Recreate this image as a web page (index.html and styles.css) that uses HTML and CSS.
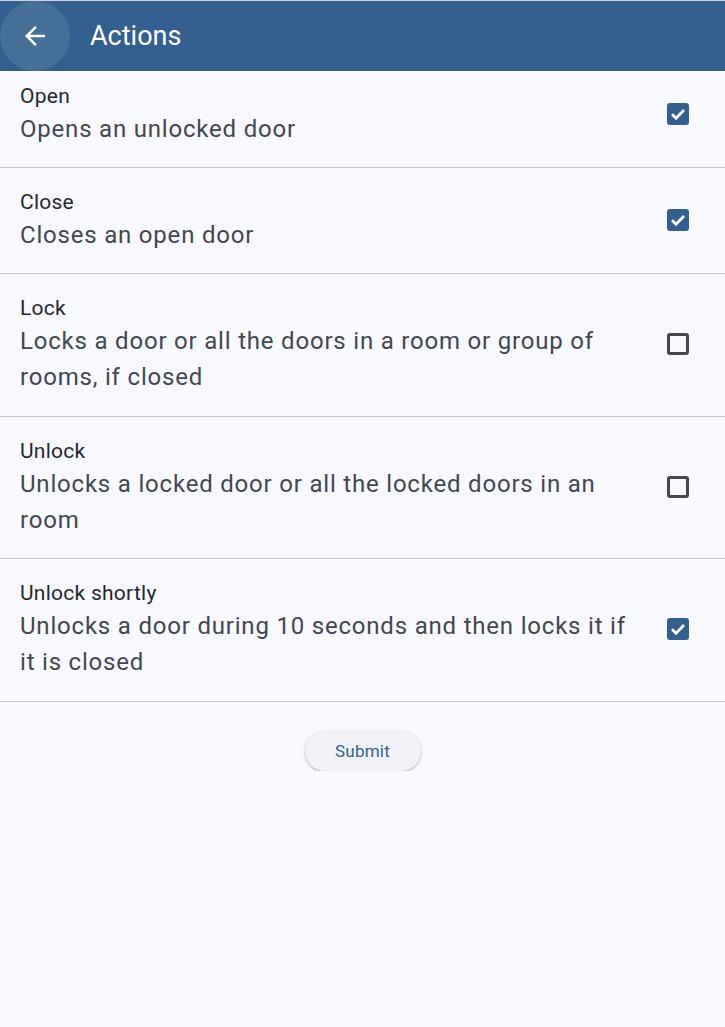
FILE: index.html
```html
<!DOCTYPE html>
<html>
<head>
<meta charset="utf-8">
<link rel="stylesheet" href="styles.css">
</head>
<body>
<header class="appbar">
  <button class="back" aria-label="Back">
    <svg width="24" height="24" viewBox="0 0 24 24"><path d="M20 11H7.83l5.59-5.59L12 4l-8 8 8 8 1.41-1.41L7.83 13H20v-2z" fill="#ffffff"/></svg>
  </button>
  <h1 class="title">Actions</h1>
</header>
<main class="list">
  <div class="row first">
    <div class="text"><div class="name">Open</div><div class="desc">Opens an unlocked door</div></div>
    <span class="cb on"><svg viewBox="0 0 22 22"><path d="M5 11.3l4 3.9 8-8.2" fill="none" stroke="#fff" stroke-width="2.8"/></svg></span>
  </div>
  <div class="row">
    <div class="text"><div class="name">Close</div><div class="desc">Closes an open door</div></div>
    <span class="cb on"><svg viewBox="0 0 22 22"><path d="M5 11.3l4 3.9 8-8.2" fill="none" stroke="#fff" stroke-width="2.8"/></svg></span>
  </div>
  <div class="row tall">
    <div class="text"><div class="name">Lock</div><div class="desc">Locks a door or all the doors in a room or group of rooms, if closed</div></div>
    <span class="cb"></span>
  </div>
  <div class="row tall">
    <div class="text"><div class="name">Unlock</div><div class="desc">Unlocks a locked door or all the locked doors in an room</div></div>
    <span class="cb"></span>
  </div>
  <div class="row tall">
    <div class="text"><div class="name">Unlock shortly</div><div class="desc">Unlocks a door during 10 seconds and then locks it if it is closed</div></div>
    <span class="cb on"><svg viewBox="0 0 22 22"><path d="M5 11.3l4 3.9 8-8.2" fill="none" stroke="#fff" stroke-width="2.8"/></svg></span>
  </div>
  <div class="actions"><button class="submit">Submit</button></div>
</main>
</body>
</html>
```
FILE: styles.css
```css
html, body {
  margin: 0;
  padding: 0;
  background: #f8f9ff;
  font-family: Roboto, "Liberation Sans", sans-serif;
}
.appbar {
  height: 70px;
  border-top: 1px solid #cfd3da;
  background: #33608e;
  display: flex;
  align-items: center;
}
.back {
  width: 70px;
  height: 70px;
  border-radius: 50%;
  border: none;
  background: rgba(255,255,255,0.1);
  display: flex;
  align-items: center;
  justify-content: center;
  padding: 0;
}
.back svg { width: 30px; height: 30px; }
.title {
  margin: 0 0 0 20px;
  color: #ffffff;
  font-weight: 400;
  font-size: 27px;
  letter-spacing: 0;
}
.list { display: flex; flex-direction: column; }
.row {
  display: flex;
  align-items: center;
  padding: 19px 36px 20px 20px;
  border-bottom: 1px solid #c4c6cf;
}
.row.first { padding-top: 10px; }
.row.tall { padding-bottom: 20.6px; }
.text { flex: 1; padding-right: 40px; }
.name {
  font-size: 21px;
  line-height: 30px;
  letter-spacing: 0.25px;
  color: #24272b;
}
.desc {
  font-size: 24px;
  line-height: 36px;
  letter-spacing: 0.8px;
  color: #43474e;
}
.cb {
  width: 22px;
  height: 22px;
  box-sizing: border-box;
  border: 3px solid #43474e;
  border-radius: 3px;
  flex: none;
  display: flex;
}
.cb.on {
  border: none;
  background: #33608e;
}
.cb svg { width: 22px; height: 22px; }
.actions {
  display: flex;
  justify-content: center;
  padding-top: 29px;
}
.submit {
  width: 116px;
  height: 40px;
  border: none;
  border-radius: 20px;
  background: #f0f2f8;
  color: #33608e;
  font-family: Roboto, "Liberation Sans", sans-serif;
  font-size: 17px;
  letter-spacing: 0.2px;
  box-shadow: 0 1px 3px rgba(0,0,0,0.25), 0 1px 1px rgba(0,0,0,0.08);
}
```
